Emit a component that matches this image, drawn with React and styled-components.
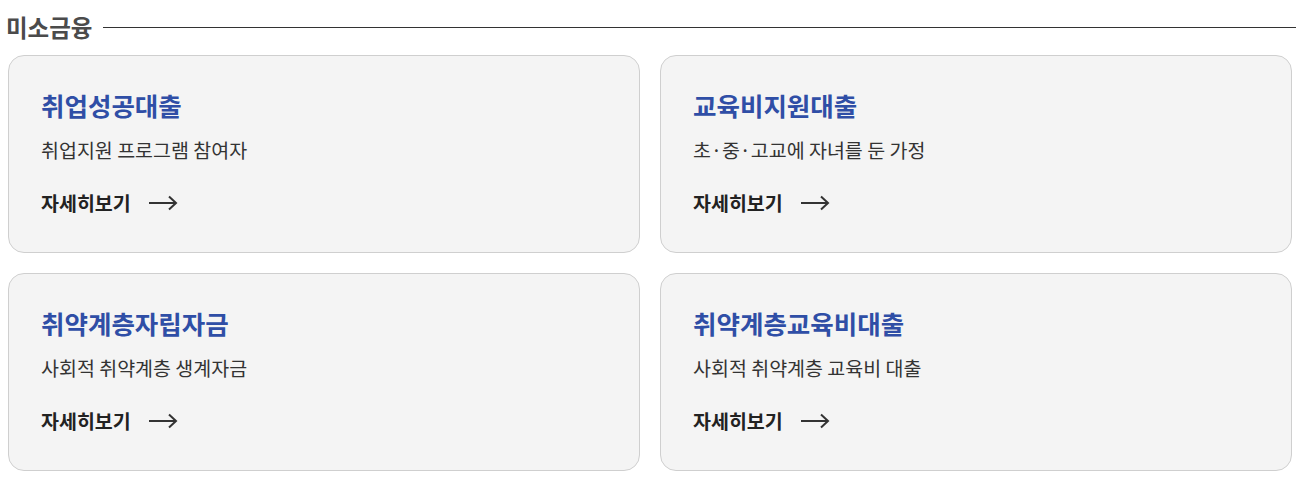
import styled, { createGlobalStyle } from 'styled-components'

const GlobalStyle = createGlobalStyle`
	body {
		margin: 0;
		background: #fff;
		font-family: 'Noto Sans CJK KR', 'Noto Sans', sans-serif;
	}
`

const products = [
	{ title: '취업성공대출', desc: '취업지원 프로그램 참여자' },
	{ title: '교육비지원대출', desc: '초·중·고교에 자녀를 둔 가정' },
	{ title: '취약계층자립자금', desc: '사회적 취약계층 생계자금' },
	{ title: '취약계층교육비대출', desc: '사회적 취약계층 교육비 대출' },
]

const Arrow = () => (
	<svg width="30" height="16" viewBox="0 0 30 16" fill="none">
		<path d="M1 8H28M21 1.5L28 8L21 14.5" stroke="#333" strokeWidth="2" />
	</svg>
)

const App = () => {
	return (
		<Wrapper>
			<GlobalStyle />
			<Heading>
				<HeadingText>미소금융</HeadingText>
				<HeadingLine />
			</Heading>
			<CardGrid>
				{products.map((item, index) => {
					return (
						<Card key={index}>
							<CardTitle>{item.title}</CardTitle>
							<CardDesc>{item.desc}</CardDesc>
							<MoreLink href="#">
								자세히보기
								<Arrow />
							</MoreLink>
						</Card>
					)
				})}
			</CardGrid>
		</Wrapper>
	)
}

export default App

const Wrapper = styled.div`
	width: 1315px;
	padding: 13px 19px 0 6px;
	box-sizing: border-box;
`
const Heading = styled.div`
	display: flex;
	align-items: center;
	gap: 11px;
	height: 28px;
`
const HeadingText = styled.h2`
	margin: 0;
	font-size: 23.5px;
	font-weight: 700;
	color: #4b4b4b;
	line-height: 28px;
`
const HeadingLine = styled.div`
	flex: 1;
	height: 1px;
	background-color: #333;
`
const CardGrid = styled.div`
	display: grid;
	grid-template-columns: 632px 632px;
	column-gap: 20px;
	row-gap: 20px;
	margin-top: 14px;
	margin-left: 2px;
`
const Card = styled.div`
	height: 198px;
	box-sizing: border-box;
	padding: 33px 32px 0;
	background-color: #f4f4f4;
	border: 1px solid #cfcfcf;
	border-radius: 16px;
	display: flex;
	flex-direction: column;
`
const CardTitle = styled.div`
	font-size: 25.5px;
	font-weight: 700;
	color: #2f4ea6;
	line-height: 32px;
`
const CardDesc = styled.div`
	margin-top: 16px;
	font-size: 19.5px;
	color: #333;
	line-height: 26px;
`
const MoreLink = styled.a`
	margin-top: 27px;
	display: flex;
	align-items: center;
	gap: 17px;
	font-size: 19.5px;
	font-weight: 700;
	color: #222;
	text-decoration: none;
	line-height: 26px;
`
